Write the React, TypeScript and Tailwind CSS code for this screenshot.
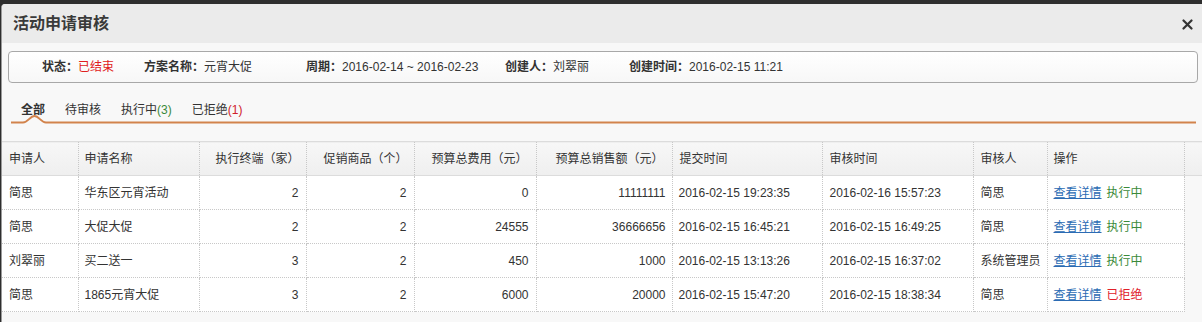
import React from "react";

const rows = [
  ["简思", "华东区元宵活动", "2", "2", "0", "11111111", "2016-02-15 19:23:35", "2016-02-16 15:57:23", "简思", "执行中"],
  ["简思", "大促大促", "2", "2", "24555", "36666656", "2016-02-15 16:45:21", "2016-02-15 16:49:25", "简思", "执行中"],
  ["刘翠丽", "买二送一", "3", "2", "450", "1000", "2016-02-15 13:13:26", "2016-02-15 16:37:02", "系统管理员", "执行中"],
  ["简思", "1865元宵大促", "3", "2", "6000", "20000", "2016-02-15 15:47:20", "2016-02-15 18:38:34", "简思", "已拒绝"],
];

const font = { fontFamily: '"Liberation Sans", "Noto Sans CJK SC", sans-serif' };

export default function App() {
  return (
    <div className="w-[1202px] h-[322px] overflow-hidden bg-[#2e2e2e] pt-[4px] pl-[1px]" style={font}>
      <div className="h-[318px] bg-[#f8f8f8] rounded-tl-[4px] border-l border-[#9a9a9a] overflow-hidden text-[12px] text-[#333]">
        {/* header */}
        <div className="h-[39px] bg-[#ebebeb] flex items-center justify-between pl-[11px] pr-[9px]">
          <div className="text-[16px] font-bold text-[#3a3a3a] tracking-[0px]">活动申请审核</div>
          <svg width="11" height="11" viewBox="0 0 11 11" className="mt-[1px]">
            <path d="M1.5 1.5 L9.5 9.5 M9.5 1.5 L1.5 9.5" stroke="#333" strokeWidth="2.2" strokeLinecap="round" />
          </svg>
        </div>
        {/* info box */}
        <div className="mt-[8px] ml-[6px] w-[1190px] h-[32px] rounded-[4px] border border-[#a8a8a8] bg-gradient-to-b from-white to-[#f7f7f7] flex items-center pl-[33px]">
          <div className="w-[102px] flex"><b>状态：</b><span className="text-[#e02020]">已结束</span></div>
          <div className="w-[162px] flex"><b>方案名称：</b><span>元宵大促</span></div>
          <div className="w-[199px] flex"><b>周期：</b><span>2016-02-14 ~ 2016-02-23</span></div>
          <div className="w-[124px] flex"><b>创建人：</b><span>刘翠丽</span></div>
          <div className="flex"><b>创建时间：</b><span>2016-02-15 11:21</span></div>
        </div>
        {/* tabs */}
        <div className="relative mt-[16px] ml-[9px] w-[1185px] h-[26px]">
          <div className="flex gap-[20px] pl-[10px] h-[21px] items-center">
            <span className="font-bold">全部</span>
            <span>待审核</span>
            <span>执行中<span className="text-[#3a8a3a]">(3)</span></span>
            <span>已拒绝<span className="text-[#d0202a]">(1)</span></span>
          </div>
          <svg className="absolute left-0 top-[14px]" width="1185" height="12" viewBox="0 0 1185 12">
            <path d="M0 9.5 L12 9.5 C17 9.5 19 3 23.5 3 C28 3 30 9.5 35 9.5 L1185 9.5" fill="none" stroke="#d2834c" strokeWidth="2" />
          </svg>
        </div>
        {/* table */}
        <div className="mt-[16px]">
          <table className="table-fixed border-collapse w-[1201px]">
            <colgroup>
              <col className="w-[76px]" />
              <col className="w-[121px]" />
              <col className="w-[107px]" />
              <col className="w-[108px]" />
              <col className="w-[122px]" />
              <col className="w-[136px]" />
              <col className="w-[150px]" />
              <col className="w-[151px]" />
              <col className="w-[74px]" />
              <col className="w-[137px]" />
              <col className="w-[19px]" />
            </colgroup>
            <thead>
              <tr className="h-[34px] bg-gradient-to-b from-[#f7f7f7] to-[#efefef] border-t border-b border-[#dcdcdc]">
                <th className="font-normal text-left pl-[7px] border-r border-dotted border-[#c8c8c8]">申请人</th>
                <th className="font-normal text-left pl-[6px] border-r border-dotted border-[#c8c8c8]">申请名称</th>
                <th className="font-normal text-right pr-[6px] border-r border-dotted border-[#c8c8c8]">执行终端（家）</th>
                <th className="font-normal text-right pr-[6px] border-r border-dotted border-[#c8c8c8]">促销商品（个）</th>
                <th className="font-normal text-right pr-[8px] border-r border-dotted border-[#c8c8c8]">预算总费用（元）</th>
                <th className="font-normal text-right pr-[8px] border-r border-dotted border-[#c8c8c8]">预算总销售额（元）</th>
                <th className="font-normal text-left pl-[7px] border-r border-dotted border-[#c8c8c8]">提交时间</th>
                <th className="font-normal text-left pl-[7px] border-r border-dotted border-[#c8c8c8]">审核时间</th>
                <th className="font-normal text-left pl-[7px] border-r border-dotted border-[#c8c8c8]">审核人</th>
                <th className="font-normal text-left pl-[6px] border-r border-dotted border-[#c8c8c8]">操作</th>
                <th></th>
              </tr>
            </thead>
            <tbody>
              {rows.map((r, i) => (
                <tr key={i} className="h-[34px]">
                  <td className="bg-white pl-[7px] border-r border-b border-dotted border-[#c8c8c8]">{r[0]}</td>
                  <td className="bg-white pl-[6px] border-r border-b border-dotted border-[#c8c8c8]">{r[1]}</td>
                  <td className="bg-white text-right pr-[7px] border-r border-b border-dotted border-[#c8c8c8]">{r[2]}</td>
                  <td className="bg-white text-right pr-[7px] border-r border-b border-dotted border-[#c8c8c8]">{r[3]}</td>
                  <td className="bg-white text-right pr-[7px] border-r border-b border-dotted border-[#c8c8c8]">{r[4]}</td>
                  <td className="bg-white text-right pr-[6px] border-r border-b border-dotted border-[#c8c8c8]">{r[5]}</td>
                  <td className="bg-white pl-[6px] border-r border-b border-dotted border-[#c8c8c8] whitespace-nowrap">{r[6]}</td>
                  <td className="bg-white pl-[7px] border-r border-b border-dotted border-[#c8c8c8] whitespace-nowrap">{r[7]}</td>
                  <td className="bg-white pl-[7px] border-r border-b border-dotted border-[#c8c8c8] whitespace-nowrap">{r[8]}</td>
                  <td className="bg-white pl-[6px] border-r border-b border-dotted border-[#c8c8c8] whitespace-nowrap">
                    <span className="text-[#2c6cb4] underline">查看详情</span>
                    <span className={"ml-[5px] " + (r[9] === "已拒绝" ? "text-[#e0202a]" : "text-[#3a8a3a]")}>{r[9]}</span>
                  </td>
                  <td></td>
                </tr>
              ))}
            </tbody>
          </table>
        </div>
      </div>
    </div>
  );
}
